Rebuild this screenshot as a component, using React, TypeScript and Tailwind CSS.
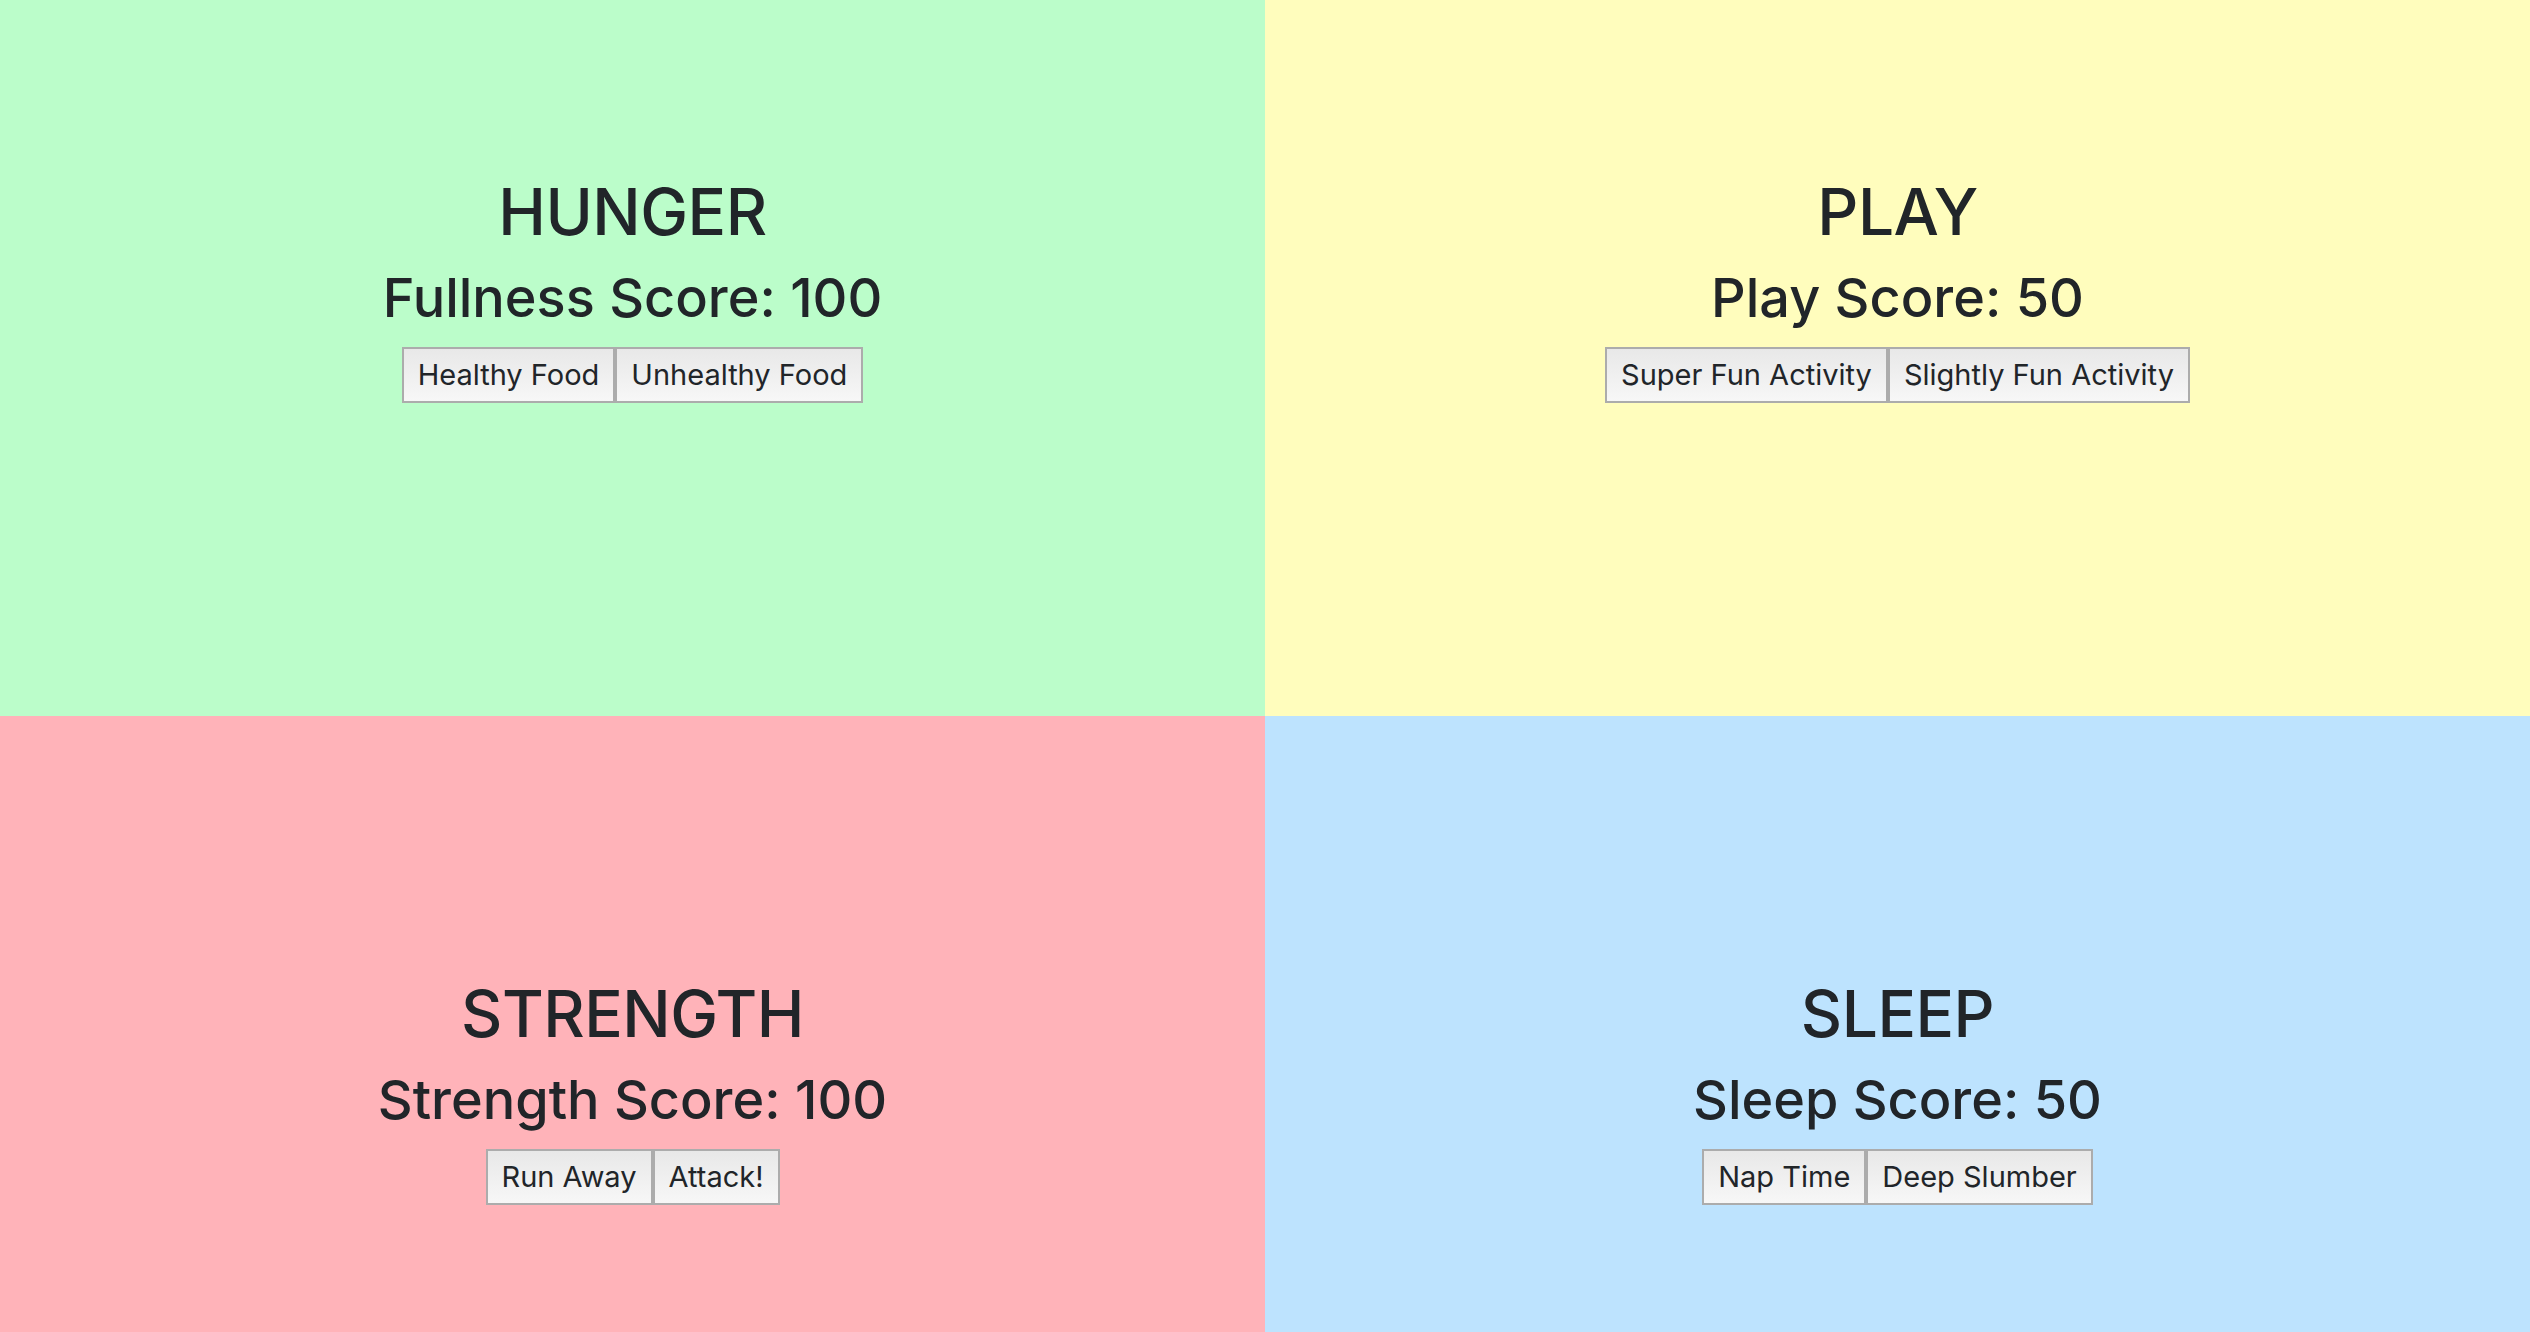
import React from "react";

type Stat = {
  title: string;
  label: string;
  score: number;
  actions: string[];
  bg: string;
  pad: string;
};

const stats: Stat[] = [
  {
    title: "HUNGER",
    label: "Fullness Score",
    score: 100,
    actions: ["Healthy Food", "Unhealthy Food"],
    bg: "bg-[#bbfdca]",
    pad: "pt-[174px] h-[716px]",
  },
  {
    title: "PLAY",
    label: "Play Score",
    score: 50,
    actions: ["Super Fun Activity", "Slightly Fun Activity"],
    bg: "bg-[#fffdbd]",
    pad: "pt-[174px] h-[716px]",
  },
  {
    title: "STRENGTH",
    label: "Strength Score",
    score: 100,
    actions: ["Run Away", "Attack!"],
    bg: "bg-[#ffb3b9]",
    pad: "pt-[260px] h-[616px]",
  },
  {
    title: "SLEEP",
    label: "Sleep Score",
    score: 50,
    actions: ["Nap Time", "Deep Slumber"],
    bg: "bg-[#bde3fe]",
    pad: "pt-[260px] h-[616px]",
  },
];

function Quadrant({ stat }: { stat: Stat }) {
  return (
    <div className={`${stat.bg} ${stat.pad} flex flex-col items-center text-[#212529]`}>
      <h1 className="text-[64px] font-medium leading-[1.2] tracking-[-0.5px]">
        {stat.title}
      </h1>
      <h2 className="mt-[15px] text-[54px] font-medium leading-[1.2]">
        {stat.label}: {stat.score}
      </h2>
      <div className="mt-[16px] flex">
        {stat.actions.map(action => (
          <button
            key={action}
            className="h-[56px] border-2 border-[#acacac] bg-gradient-to-b from-[#e8e8e8] to-[#f7f7f7] px-[14px] text-[29px] leading-none text-[#212529]"
          >
            {action}
          </button>
        ))}
      </div>
    </div>
  );
}

export default function App() {
  return (
    <div
      className="grid h-[1332px] w-full grid-cols-2 overflow-hidden"
      style={{ fontFamily: "Inter, 'Noto Sans', sans-serif" }}
    >
      {stats.map(stat => (
        <Quadrant key={stat.title} stat={stat} />
      ))}
    </div>
  );
}
